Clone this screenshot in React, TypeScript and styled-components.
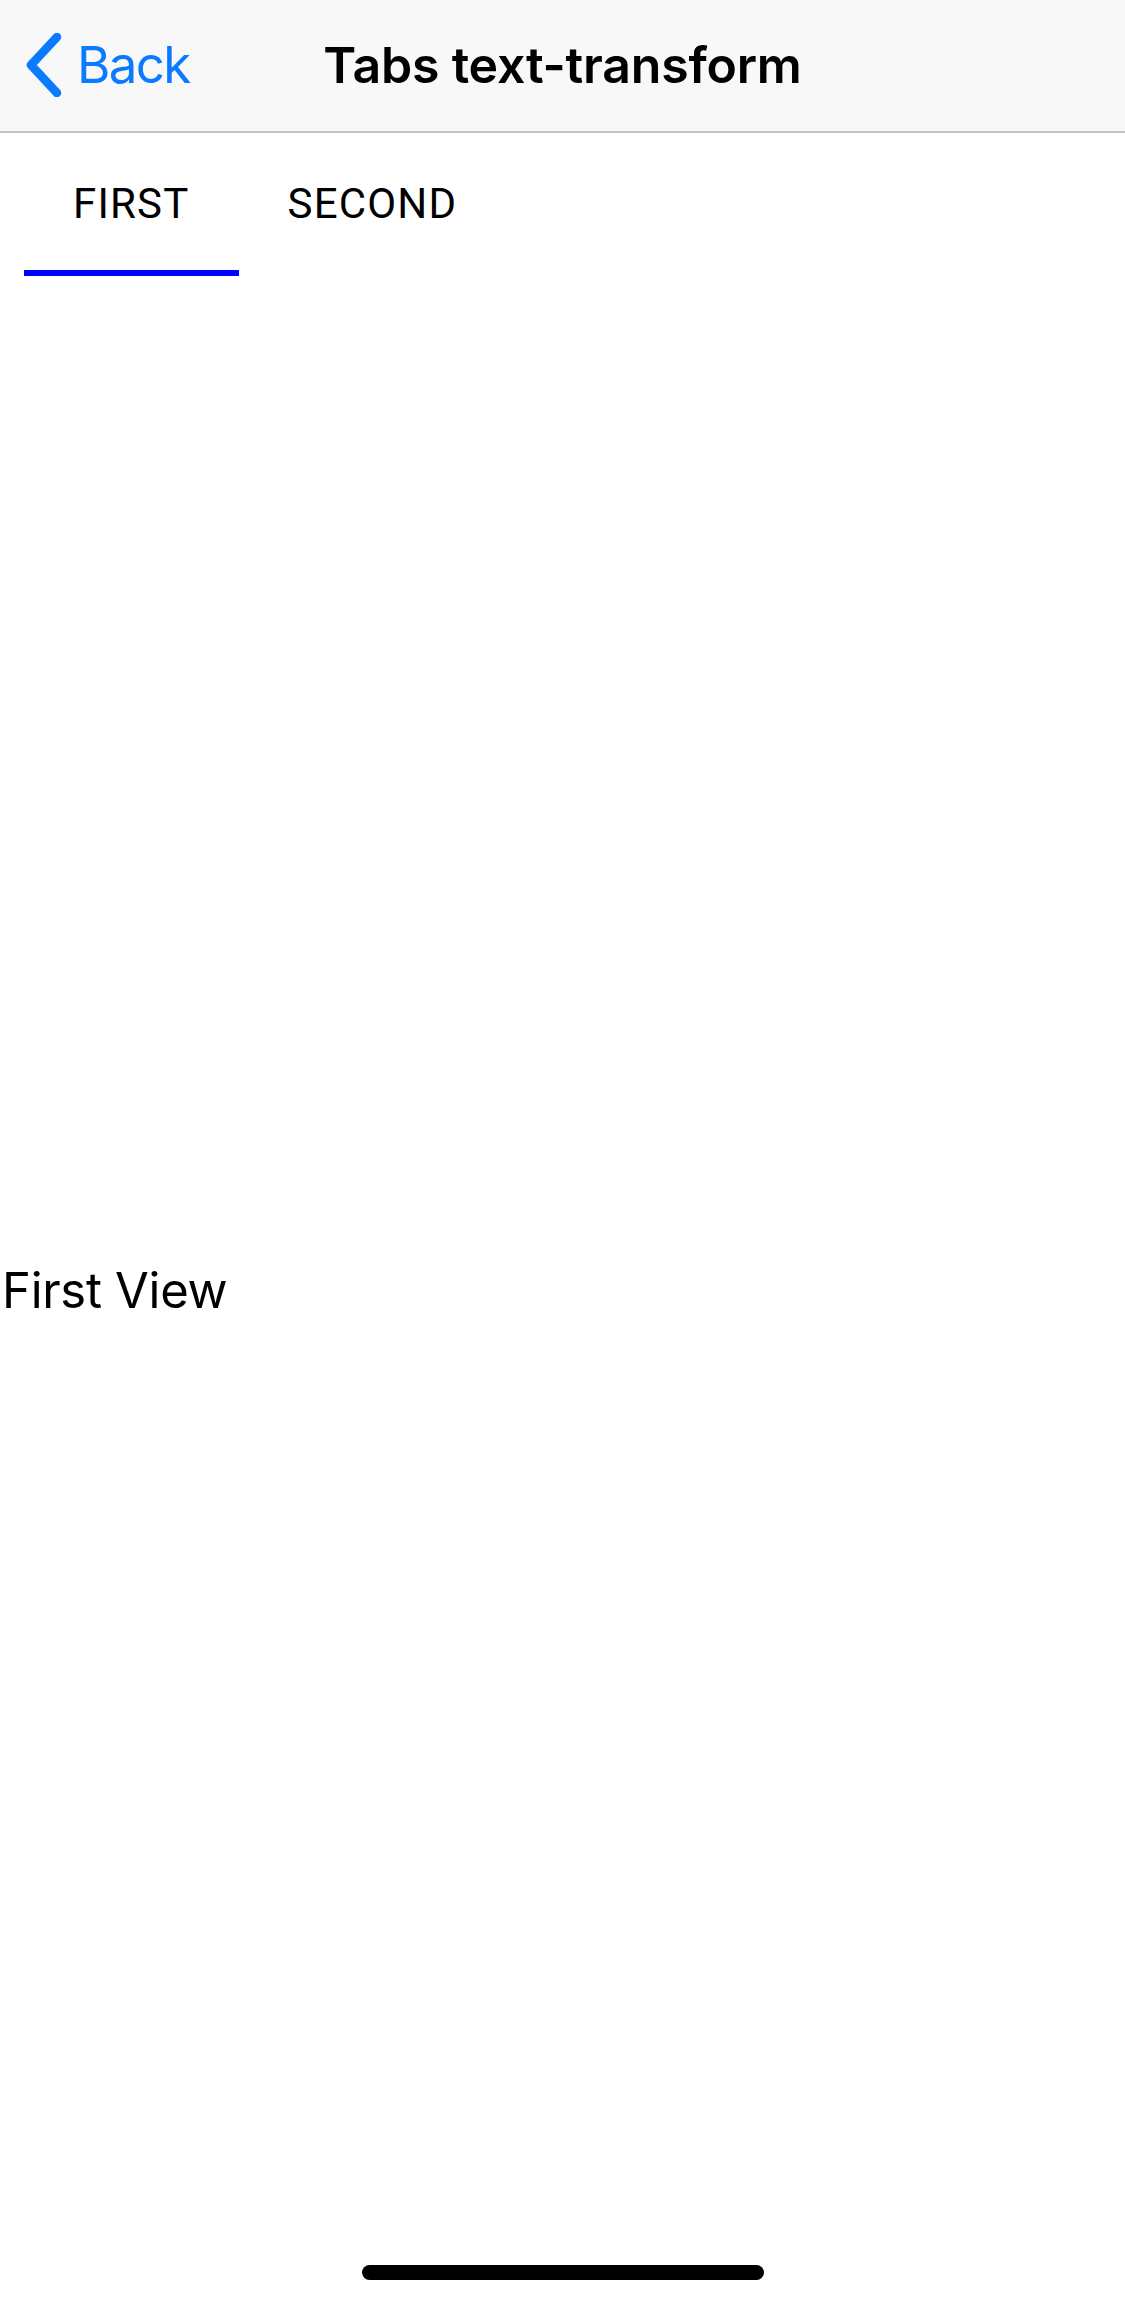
import React, { useState } from 'react'
import styled, { createGlobalStyle } from 'styled-components'

const GlobalStyle = createGlobalStyle`
    html, body {
        margin: 0;
        padding: 0;
        background: #ffffff;
    }
    * {
        box-sizing: border-box;
    }
`

const Screen = styled.div`
    position: relative;
    width: 1125px;
    height: 2304px;
    display: flex;
    flex-direction: column;
    background: #ffffff;
    font-family: Inter, "Liberation Sans", sans-serif;
    overflow: hidden;
`

const NavBar = styled.div`
    height: 133px;
    flex-shrink: 0;
    display: grid;
    grid-template-columns: 1fr auto 1fr;
    align-items: center;
    background: #f8f8f8;
    border-bottom: 2px solid #c4c4c6;
    padding-bottom: 2px;
`

const BackButton = styled.div`
    display: flex;
    align-items: center;
    gap: 13px;
    padding-left: 26px;
    color: #0a7aff;
    font-size: 51px;
    letter-spacing: -1.6px;
`

const Title = styled.div`
    font-size: 50px;
    font-weight: 600;
    color: #000000;
    letter-spacing: -0.2px;
`

const TabBar = styled.div`
    height: 143px;
    flex-shrink: 0;
    display: flex;
    align-items: stretch;
    padding-left: 24px;
`

const Tab = styled.div<{ $active: boolean }>`
    display: flex;
    align-items: center;
    justify-content: center;
    padding: 4px 49px 0;
    font-family: Roboto, Inter, sans-serif;
    font-size: 42px;
    color: #000000;
    letter-spacing: 1.2px;
    text-transform: uppercase;
    border-bottom: 6px solid ${p => (p.$active ? '#0000ff' : 'transparent')};
    cursor: pointer;
`

const Content = styled.div`
    flex: 1;
    display: flex;
    align-items: center;
`

const ViewLabel = styled.div`
    font-size: 49px;
    color: #000000;
    padding-left: 2px;
    letter-spacing: -0.3px;
`

const HomeIndicator = styled.div`
    position: absolute;
    left: 362px;
    bottom: 24px;
    width: 402px;
    height: 15px;
    border-radius: 8px;
    background: #000000;
`

const Chevron = () => (
    <svg width="38" height="64" viewBox="0 0 38 64">
        <path d="M31 4 L5 32 L31 60" fill="none" stroke="#0a7aff" strokeWidth="8.5" strokeLinecap="round" strokeLinejoin="round" />
    </svg>
)

const tabs = [
    { key: 'first', label: 'First', view: 'First View' },
    { key: 'second', label: 'Second', view: 'Second View' },
]

export default function App() {
    const [active, setActive] = useState('first')
    const current = tabs.find(t => t.key === active)

    return (
        <>
            <GlobalStyle />
            <Screen>
                <NavBar>
                    <BackButton>
                        <Chevron />
                        <span>Back</span>
                    </BackButton>
                    <Title>Tabs text-transform</Title>
                    <div />
                </NavBar>
                <TabBar>
                    {tabs.map(t => (
                        <Tab key={t.key} $active={t.key === active} onClick={() => setActive(t.key)}>
                            {t.label}
                        </Tab>
                    ))}
                </TabBar>
                <Content>
                    <ViewLabel>{current?.view}</ViewLabel>
                </Content>
                <HomeIndicator />
            </Screen>
        </>
    )
}
